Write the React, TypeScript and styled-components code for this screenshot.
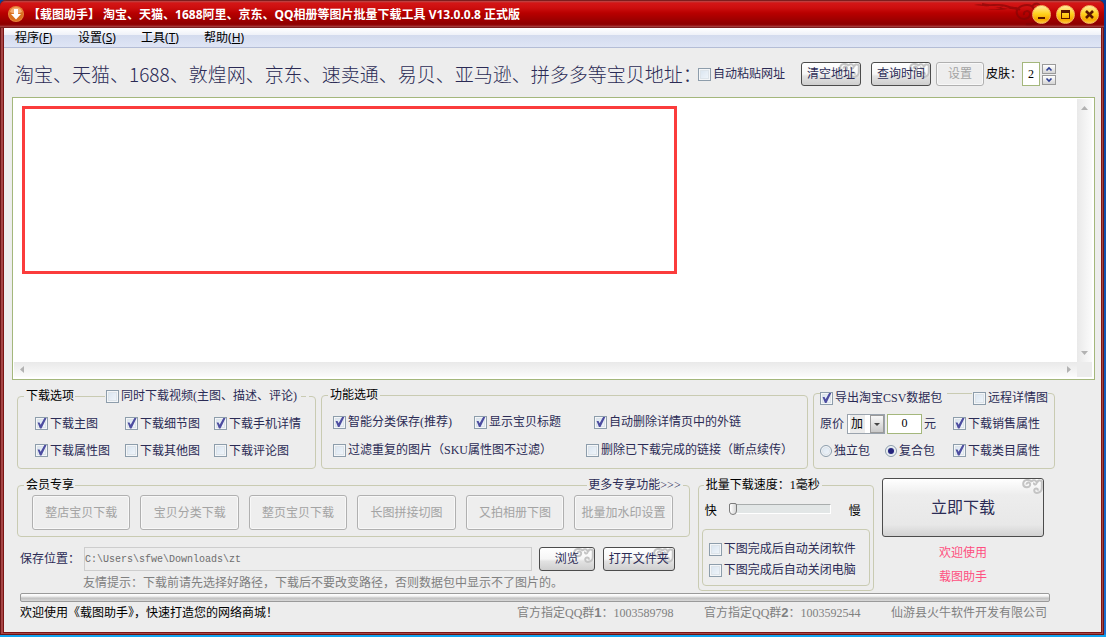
import React from "react";
import styled, { createGlobalStyle, css } from "styled-components";

const ink = "#2b2b55";
const rule = "#c9cbb2";
const face = "#ededed";
const song = `"Liberation Serif", "Noto Sans CJK SC", serif`;
const ui = `"Noto Sans", "Noto Sans CJK SC", sans-serif`;

const GlobalStyle = createGlobalStyle`
  *, *::before, *::after { box-sizing: border-box; }
  body {
    margin: 0;
    background: linear-gradient(to bottom, #0a3f98, #1a6fd0 calc(100% - 3px), #12a5f0 calc(100% - 2px));
    background-attachment: fixed;
    font: 12px/16px ${song};
    color: ${ink};
  }
  button, input, select, textarea { font: inherit; color: inherit; margin: 0; }
`;

const Frame = styled.div`
  display: flex;
  flex-direction: column;
  min-width: 1080px;
  min-height: calc(100vh - 2px);
  margin-right: 2px;
  padding: 0 1px 1px 2px;
  border: solid #6d1616;
  border-width: 0 1px 1px 1px;
  border-radius: 6px 6px 0 0;
  background: #a64646;
`;

const TitleBar = styled.header`
  position: relative;
  display: flex;
  align-items: center;
  height: 28px;
  margin: 0 -2px 0 -3px;
  padding: 0 5px 0 8px;
  border-radius: 6px 6px 0 0;
  border: solid #7e1d1d;
  border-width: 1px 0;
  background: linear-gradient(#b84a4a 0, #d41616 2px, #cc0e0e 7px, #b80000 12px, #8e0000 23px, #940808 24px, #a64a4a 26px);
`;

const AppIcon = styled.svg`
  width: 16px;
  height: 16px;
  flex: none;
`;

const Title = styled.h1`
  margin: 0 auto 0 4px;
  padding-top: 2px;
  font: bold 12px/18px ${ui};
  color: #fff;
  white-space: nowrap;
`;

const Cloud = styled.svg`
  position: absolute;
  right: 46px;
  top: 0;
  width: 84px;
  height: 25px;
`;

const CaptionButtons = styled.div`
  position: relative;
  display: flex;
  gap: 5px;
`;

const CaptionButton = styled.button`
  width: 19px;
  height: 19px;
  padding: 0;
  border: 1px solid #f6b860;
  border-radius: 50%;
  background: linear-gradient(#ffe9a0, #ffd21e 45%, #f6a700 80%, #ffc83a);
  svg { display: block; width: 17px; height: 17px; }
`;

const Body = styled.main`
  flex: 1;
  display: flex;
  flex-direction: column;
  border: solid #7a1414;
  border-width: 0 1px 1px 1px;
  background: ${face};
`;

const MenuBar = styled.nav`
  display: flex;
  height: 20px;
  padding-left: 11px;
  border-bottom: 1px solid #b4bdd6;
  background: linear-gradient(#ffffff 0, #eef1f8 7px, #d3dbee 7px, #dfe5f5 19px);
`;

const MenuItem = styled.button`
  width: 63px;
  padding: 0;
  border: 0;
  background: none;
  font: 12px/19px ${ui};
  color: #000;
  text-align: left;
`;

const Toolbar = styled.div`
  display: flex;
  align-items: center;
  height: 49px;
  padding-left: 11px;
  padding-top: 3px;
  white-space: nowrap;
`;

const Heading = styled.h2`
  width: 683px;
  margin: 0;
  font: 300 19px/26px "Noto Sans CJK SC", sans-serif;
`;

const Push = styled.div<{ $l: number }>`
  display: flex;
  align-items: center;
  margin-left: ${(p) => p.$l}px;
`;

const Button = styled.button<{ $w?: number; $big?: boolean }>`
  position: relative;
  flex: none;
  width: ${(p) => p.$w}px;
  height: 24px;
  padding: 0;
  border: 1px solid #4c4c4c;
  border-radius: 3px;
  background: linear-gradient(#ffffff, #f6f6f6 50%, #e2e2e2 60%, #cfcfcf);
  white-space: nowrap;
  ${(p) =>
    p.$big &&
    css`
      width: auto;
      height: 59px;
      margin-top: 1px;
      font-size: 16px;
      background: linear-gradient(#ffffff, #ededed 28%, #e8e8e8 80%, #d2d2d2);
    `}
  &:disabled {
    border-color: #b0b0b0;
    background: #eeeeee;
    box-shadow: inset 0 0 0 1px #f8f8f8;
    color: #a3a3a3;
  }
  span { position: relative; }
`;

const TallButton = styled(Button)`
  flex: 1;
  height: 35px;
`;

const Curl = styled.svg`
  position: absolute;
  right: 0;
  top: 0;
  width: 21px;
  height: 16px;
`;

const Skin = styled.label`
  display: flex;
  align-items: center;
  margin-left: 2px;
  color: #000;
`;

const SmallInput = styled.input<{ $w: number; $h: number }>`
  width: ${(p) => p.$w}px;
  height: ${(p) => p.$h}px;
  padding: 0;
  border: 1px solid #a4b77c;
  border-radius: 0;
  background: #fff;
  color: #000;
  text-align: center;
`;

const Spinner = styled.div`
  display: flex;
  flex-direction: column;
  gap: 1px;
  margin-left: 2px;
`;

const SpinButton = styled.button`
  width: 14px;
  height: 10px;
  padding: 0;
  border: 1px solid #9a9a9a;
  background: linear-gradient(#fff, #d5d5d5);
  svg { display: block; width: 12px; height: 8px; }
`;

const Editor = styled.section`
  position: relative;
  flex: 1;
  display: grid;
  grid-template: minmax(200px, 1fr) 15px / 1fr 15px;
  margin: 0 6px 0 8px;
  padding: 1px 2px 2px 1px;
  border: 1px solid #a4b77c;
  background: #fff;
`;

const Links = styled.textarea`
  min-width: 0;
  padding: 4px;
  border: 0;
  outline: 0;
  resize: none;
  overflow: hidden;
  background: #fff;
`;

const Scroll = styled.div<{ $x?: boolean }>`
  display: flex;
  flex-direction: ${(p) => (p.$x ? "row" : "column")};
  align-items: center;
  justify-content: space-between;
  padding: ${(p) => (p.$x ? "0 4px" : "4px 0")};
  background: linear-gradient(${(p) => (p.$x ? "to bottom" : "to right")}, #e9e9e9, #fbfbfb);
  svg { display: block; width: 9px; height: 9px; fill: #b2b2b2; }
`;

const Corner = styled.div`
  background: #ececec;
`;

const Marker = styled.div`
  position: absolute;
  left: 9px;
  top: 8px;
  width: 61%;
  max-width: 655px;
  height: 60%;
  max-height: 168px;
  border: 3px solid #fb3c3c;
  pointer-events: none;
`;

const Groups = styled.div`
  display: grid;
  grid-template-columns: 299fr 487fr 242fr;
  gap: 5px;
  align-items: end;
  margin: 0 46px 0 13px;
`;

const Fieldset = styled.fieldset`
  min-width: 0;
  margin: 0;
  padding: 0 6px 4px 6px;
  border: 1px solid ${rule};
  border-radius: 4px;
`;

const Legend = styled.legend<{ $fit?: boolean; $tall?: boolean }>`
  display: flex;
  align-items: center;
  width: ${(p) => (p.$fit ? "auto" : "100%")};
  height: ${(p) => (p.$tall ? 26 : 16)}px;
  padding: ${(p) => (p.$tall ? "0" : "0 2px")};
  white-space: nowrap;
  b { font-weight: normal; color: #000; }
`;

const Line = styled.span<{ $w?: number }>`
  flex: ${(p) => (p.$w ? `0 0 ${p.$w}px` : "1")};
  height: 1px;
  margin: 0 1px;
  background: ${rule};
`;

const Rows = styled.div<{ $pad: string }>`
  padding: ${(p) => p.$pad};
`;

const Row = styled.div<{ $h: number }>`
  display: flex;
  align-items: center;
  height: ${(p) => p.$h}px;
  white-space: nowrap;
`;

const Option = styled.label<{ $w?: number; $low?: boolean }>`
  display: flex;
  flex: none;
  align-items: center;
  gap: 2px;
  width: ${(p) => (p.$w ? p.$w + "px" : "auto")};
  align-self: ${(p) => (p.$low ? "flex-end" : "auto")};
  white-space: nowrap;
`;

const Box = styled.input`
  appearance: none;
  flex: none;
  width: 13px;
  height: 13px;
  border: 1px solid #8d9dab;
  background: linear-gradient(135deg, #d6e2ee, #f4f8fc);
  box-shadow: inset 0 0 0 1px #f4f6f8, inset 0 0 0 2px #dde4ea;
  &[type="radio"] { border-radius: 50%; width: 12px; height: 12px; }
  &:checked::before {
    content: "";
    display: block;
    width: 11px;
    height: 11px;
    background: #4d4da0;
    clip-path: polygon(14% 40%, 32% 40%, 42% 62%, 76% 0, 96% 0, 50% 96%, 36% 96%);
  }
  &[type="radio"]:checked::before {
    width: 6px;
    height: 6px;
    margin: 2px;
    border-radius: 50%;
    background: #25257c;
    clip-path: none;
  }
`;

const Picker = styled.div`
  position: relative;
  width: 38px;
  height: 20px;
  margin-left: 1px;
  border: 1px solid #9aa3ad;
  background: #fff;
  select {
    appearance: none;
    width: 100%;
    height: 18px;
    padding: 0 0 0 3px;
    border: 0;
    background: linear-gradient(to right, #fff 2px, #ebebeb 2px, #ebebeb 17px, #fff 17px);
    color: #000;
  }
  svg {
    position: absolute;
    right: 0;
    top: 0;
    width: 14px;
    height: 18px;
    border: 1px solid #9a9a9a;
    background: linear-gradient(#f8f8f8, #c9c9c9);
    pointer-events: none;
  }
`;

const Lower = styled.div`
  display: grid;
  grid-template-columns: 672fr 176fr 162fr;
  gap: 8px;
  margin: 8px 57px 0 13px;
`;

const Stack = styled.div`
  display: flex;
  flex-direction: column;
  min-width: 0;
`;

const ButtonRow = styled.div`
  display: flex;
  gap: 10px;
  padding: 2px 10px 2px 8px;
`;

const MoreLink = styled.a`
  color: ${ink};
  text-decoration: none;
`;

const SaveRow = styled.div`
  display: flex;
  align-items: center;
  padding: 10px 15px 0 3px;
  white-space: nowrap;
`;

const PathInput = styled.input`
  flex: 1;
  min-width: 0;
  height: 24px;
  margin: 0 7px 0 4px;
  padding: 0;
  border: 1px solid #cdcdcd;
  background: ${face};
  font: 10px/22px "Liberation Mono", monospace;
  color: #6e6e6e;
`;

const Hint = styled.p`
  margin: 4px 0 0 66px;
  color: #808080;
`;

const Speed = styled(Fieldset)`
  padding: 0 3px 2px 3px;
  legend { margin-left: 2px; }
`;

const Slow = styled.label`
  display: flex;
  align-items: center;
  justify-content: space-between;
  height: 36px;
  padding: 0 9px 0 3px;
  color: #000;
`;

const Range = styled.input`
  appearance: none;
  flex: 1;
  min-width: 0;
  height: 14px;
  margin: 0 18px 4px 12px;
  background: none;
  &::-webkit-slider-runnable-track {
    height: 10px;
    border: solid #fff;
    border-width: 1px 1px 1px 0;
    border-top-color: #a9adad;
    background: #e2e6e6;
  }
  &::-webkit-slider-thumb {
    appearance: none;
    width: 8px;
    height: 12px;
    margin-top: -2px;
    border: 1px solid #7c7c7c;
    border-radius: 2px 2px 4px 4px;
    background: linear-gradient(to right, #fff, #d6d6d6);
  }
`;

const Inner = styled.div`
  display: flex;
  flex-direction: column;
  justify-content: center;
  gap: 5px;
  height: 57px;
  padding: 4px 0 0 6px;
  border: 1px solid ${rule};
  border-radius: 4px;
`;

const Welcome = styled.p`
  margin: 8px 0 0;
  color: #ff4f80;
  text-align: center;
`;

const Progress = styled.div`
  height: 9px;
  margin: 2px 51px 0 16px;
  border: 1px solid #9a9a9a;
  border-radius: 2px;
  background: linear-gradient(#ffffff, #f4f4f4 30%, #c2c2c2 60%, #d8d8d8);
`;

const StatusBar = styled.footer`
  display: flex;
  height: 30px;
  padding: 3px 54px 0 16px;
  color: #808080;
  white-space: nowrap;
  b { font-family: "Liberation Sans", sans-serif; font-size: 13px; }
  strong { flex: 1; font-weight: normal; color: #000; }
`;

const StatusItem = styled.span`
  width: 187px;
  &:last-child { width: auto; }
`;

function Swirl() {
  return (
    <Curl viewBox="0 0 21 16" fill="none" stroke="#c4c4c4" strokeWidth="2" aria-hidden>
      <path d="M10 3C8 0 1.200.2 1.200 5c0 4.200 7 4.200 7 .6 0-2.800-3.900-2.600-3.600 0" />
      <path d="M9.500 2.200c3-2 5.700-.4 5 2.300-.6 1.800-3.200 1.200-2.500-.8" />
      <path d="M20 2.500c-2-2-5-1-4.600 1.500M19.800 2v7c0 5.500-7.600 6.400-7.600 2.500 0-2.800 4-2.700 3.600.1" />
    </Curl>
  );
}

function Check({ text, on, w, low }: { text: string; on?: boolean; w?: number; low?: boolean }) {
  return (
    <Option $w={w} $low={low}>
      <Box type="checkbox" defaultChecked={on} />
      {text}
    </Option>
  );
}

function Menu({ name, k }: { name: string; k: string }) {
  return (
    <MenuItem>
      {name}(<u>{k}</u>)
    </MenuItem>
  );
}

function SwirlButton({ text, w, big }: { text: string; w?: number; big?: boolean }) {
  return (
    <Button type="button" $w={w} $big={big}>
      <Swirl />
      <span>{text}</span>
    </Button>
  );
}

const memberTools = ["整店宝贝下载", "宝贝分类下载", "整页宝贝下载", "长图拼接切图", "又拍相册下图", "批量加水印设置"];

export default function App() {
  return (
    <>
      <GlobalStyle />
      <Frame>
        <TitleBar>
          <AppIcon viewBox="0 0 16 16">
            <circle cx="8" cy="8" r="8" fill="#e8843a" />
            <circle cx="8" cy="8" r="7" fill="#d9701f" />
            <path d="M2 6a6.200 6.200 0 0 1 12 0q-6 3-12 0z" fill="#f3ac70" />
            <path d="M6 3h4v5h3l-5 5.500L3 8h3z" fill="#fff" />
          </AppIcon>
          <Title>【载图助手】 淘宝、天猫、1688阿里、京东、QQ相册等图片批量下载工具 V13.0.0.8 正式版</Title>
          <Cloud viewBox="0 0 84 25" fill="none" stroke="#7c0606" strokeWidth="2" opacity="0.6" aria-hidden>
            <path d="M0 4c9-3 14 5 30 1-6 5-12 2-16 4 6-1 14 1 22-2 4-2 8-1 10 2" fill="#7c0606" stroke="none" />
            <path d="M8 3c8 3 16-1 24 2s10 1 14 4" />
            <path d="M50 14c-1-5 6-5 6-1 0 5-8 7-12 2-4-6 2-11 9-11 8 0 9 8 6 13" />
            <path d="M58 6c2-5 9-4 8 1-1 3-6 2-4-1M60 18c5-5 10-3 14 5M52 23c6 2 12-4 18 0" />
          </Cloud>
          <CaptionButtons>
            <CaptionButton aria-label="最小化">
              <svg viewBox="0 0 17 17"><path d="M5 11h7v2H5z" fill="#5a1500" /></svg>
            </CaptionButton>
            <CaptionButton aria-label="最大化">
              <svg viewBox="0 0 17 17"><path d="M4 4h9v9H4zM5 7v5h7V7z" fill="#5a1500" fillRule="evenodd" /></svg>
            </CaptionButton>
            <CaptionButton aria-label="关闭">
              <svg viewBox="0 0 17 17"><path d="M5 5l7 7M12 5l-7 7" stroke="#5a1500" strokeWidth="2.600" /></svg>
            </CaptionButton>
          </CaptionButtons>
        </TitleBar>
        <Body>
          <MenuBar>
            <Menu name="程序" k="F" />
            <Menu name="设置" k="S" />
            <Menu name="工具" k="T" />
            <Menu name="帮助" k="H" />
          </MenuBar>
          <Toolbar>
            <Heading>淘宝、天猫、1688、敦煌网、京东、速卖通、易贝、亚马逊、拼多多等宝贝地址：</Heading>
            <Check text="自动粘贴网址" />
            <Push $l={16}><SwirlButton text="清空地址" w={60} /></Push>
            <Push $l={10}><SwirlButton text="查询时间" w={60} /></Push>
            <Push $l={5}><Button type="button" disabled $w={48}>设置</Button></Push>
            <Skin>
              皮肤：
              <SmallInput $w={18} $h={24} defaultValue="2" />
            </Skin>
            <Spinner>
              <SpinButton aria-label="增加">
                <svg viewBox="0 0 12 8"><path d="M3.500 5.500L6 3l2.500 2.500" fill="none" stroke="#2d3f94" strokeWidth="1.600" /></svg>
              </SpinButton>
              <SpinButton aria-label="减少">
                <svg viewBox="0 0 12 8"><path d="M3.500 2.500L6 5l2.500-2.500" fill="none" stroke="#2d3f94" strokeWidth="1.600" /></svg>
              </SpinButton>
            </Spinner>
          </Toolbar>
          <Editor>
            <Links aria-label="宝贝地址" />
            <Scroll>
              <svg viewBox="0 0 9 9"><path d="M1 7l3.500-4L8 7z" /></svg>
              <svg viewBox="0 0 9 9"><path d="M1 2l3.500 4L8 2z" /></svg>
            </Scroll>
            <Scroll $x>
              <svg viewBox="0 0 9 9"><path d="M6 1L2 4.500 6 8z" /></svg>
              <svg viewBox="0 0 9 9"><path d="M3 1l4 3.500L3 8z" /></svg>
            </Scroll>
            <Corner />
            <Marker />
          </Editor>

          <Groups>
            <Fieldset>
              <Legend>
                <b>下载选项</b>
                <Line />
                <Check text="同时下载视频(主图、描述、评论)" w={194} />
                <Line $w={5} />
              </Legend>
              <Rows $pad="6px 0 0 11px">
                <Row $h={27}>
                  <Check text="下载主图" on w={90} />
                  <Check text="下载细节图" on w={89} />
                  <Check text="下载手机详情" on />
                </Row>
                <Row $h={27}>
                  <Check text="下载属性图" on w={90} />
                  <Check text="下载其他图" w={89} />
                  <Check text="下载评论图" />
                </Row>
              </Rows>
            </Fieldset>
            <Fieldset>
              <Legend $fit><b>功能选项</b></Legend>
              <Rows $pad="5px 0 0 5px">
                <Row $h={28}>
                  <Check text="智能分类保存(推荐)" on w={141} />
                  <Check text="显示宝贝标题" on w={120} />
                  <Check text="自动删除详情页中的外链" on />
                </Row>
                <Row $h={28}>
                  <Check text="过滤重复的图片（SKU属性图不过滤）" w={253} />
                  <Check text="删除已下载完成的链接（断点续传）" />
                </Row>
              </Rows>
            </Fieldset>
            <Fieldset>
              <Legend $tall>
                <Check text="导出淘宝CSV数据包" on w={126} low />
                <Line />
                <Check text="远程详情图" low w={75} />
              </Legend>
              <Rows $pad="4px 0 0 0">
                <Row $h={27}>
                  <Option as="div" $w={133}>
                    <span>原价</span>
                    <Picker>
                      <select aria-label="价格运算" defaultValue="加">
                        <option>加</option>
                        <option>减</option>
                      </select>
                      <svg viewBox="0 0 12 16"><path d="M3 7h6L6 10z" fill="#444" /></svg>
                    </Picker>
                    <SmallInput $w={35} $h={20} defaultValue="0" aria-label="原价" />
                    <span>元</span>
                  </Option>
                  <Check text="下载销售属性" on />
                </Row>
                <Row $h={27}>
                  <Option $w={65}>
                    <Box type="radio" name="pack" />
                    独立包
                  </Option>
                  <Option $w={68}>
                    <Box type="radio" name="pack" defaultChecked />
                    复合包
                  </Option>
                  <Check text="下载类目属性" on />
                </Row>
              </Rows>
            </Fieldset>
          </Groups>

          <Lower>
            <Stack>
              <Fieldset>
                <Legend>
                  <b>会员专享</b>
                  <Line />
                  <MoreLink href="#more">更多专享功能&gt;&gt;&gt;</MoreLink>
                </Legend>
                <ButtonRow>
                  {memberTools.map((t) => (
                    <TallButton key={t} type="button" disabled>{t}</TallButton>
                  ))}
                </ButtonRow>
              </Fieldset>
              <SaveRow>
                <label htmlFor="path">保存位置：</label>
                <PathInput id="path" readOnly defaultValue="C:\Users\sfwe\Downloads\zt" />
                <SwirlButton text="浏览" w={56} />
                <Push $l={8}><SwirlButton text="打开文件夹" w={72} /></Push>
              </SaveRow>
              <Hint>友情提示：下载前请先选择好路径，下载后不要改变路径，否则数据包中显示不了图片的。</Hint>
            </Stack>
            <Speed>
              <Legend $fit><b>批量下载速度：1毫秒</b></Legend>
              <Slow>
                快
                <Range type="range" min={0} max={100} defaultValue={0} />
                慢
              </Slow>
              <Inner>
                <Check text="下图完成后自动关闭软件" />
                <Check text="下图完成后自动关闭电脑" />
              </Inner>
            </Speed>
            <Stack>
              <SwirlButton text="立即下载" big />
              <Welcome>欢迎使用</Welcome>
              <Welcome>载图助手</Welcome>
            </Stack>
          </Lower>

          <Progress role="progressbar" aria-label="下载进度" />
          <StatusBar>
            <strong>欢迎使用《载图助手》，快速打造您的网络商城！</strong>
            <StatusItem>官方指定QQ群<b>1</b>：1003589798</StatusItem>
            <StatusItem>官方指定QQ群<b>2</b>：1003592544</StatusItem>
            <StatusItem>仙游县火牛软件开发有限公司</StatusItem>
          </StatusBar>
        </Body>
      </Frame>
    </>
  );
}
